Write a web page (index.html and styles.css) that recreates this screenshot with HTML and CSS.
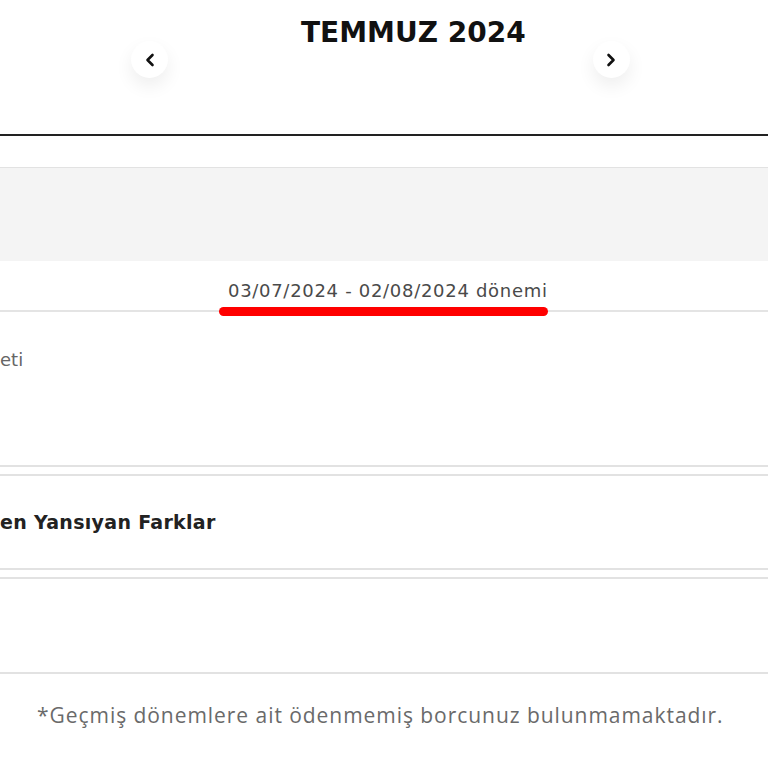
FILE: index.html
```html
<!DOCTYPE html>
<html lang="tr">
<head>
<meta charset="utf-8">
<link rel="stylesheet" href="styles.css">
</head>
<body>
<div class="page">
  <header class="head">
    <button class="nav nav-prev" aria-label="Önceki">
      <svg width="12" height="14" viewBox="0 0 12 14"><path d="M8.5 2 L3.5 7 L8.5 12" fill="none" stroke="#111" stroke-width="2.6" stroke-linecap="round" stroke-linejoin="round"/></svg>
    </button>
    <h1 class="title">TEMMUZ 2024</h1>
    <button class="nav nav-next" aria-label="Sonraki">
      <svg width="12" height="14" viewBox="0 0 12 14"><path d="M3.5 2 L8.5 7 L3.5 12" fill="none" stroke="#111" stroke-width="2.6" stroke-linecap="round" stroke-linejoin="round"/></svg>
    </button>
  </header>
  <div class="rule-dark"></div>
  <div class="spacer"></div>
  <div class="band"></div>
  <div class="period">
    <span class="period-text">03/07/2024 - 02/08/2024 dönemi</span>
  </div>
  <div class="period-line"><span class="red-bar"></span></div>
  <div class="row row-service">
    <span class="label">eti</span>
  </div>
  <div class="row-gap"></div>
  <div class="row row-diff">
    <span class="label bold">en Yansıyan Farklar</span>
  </div>
  <div class="row-gap"></div>
  <div class="row row-empty"></div>
  <p class="note">*Geçmiş dönemlere ait ödenmemiş borcunuz bulunmamaktadır.</p>
</div>
</body>
</html>
```

FILE: styles.css
```css
html, body {
  margin: 0;
  padding: 0;
  background: #fff;
  overflow: hidden;
}
.page {
  width: 768px;
  height: 768px;
  font-family: "DejaVu Sans", sans-serif;
  color: #222;
}
.head {
  height: 134px;
  display: flex;
  align-items: flex-start;
}
.title {
  margin: 17px 0 0 133px;
  font-size: 28px;
  font-weight: 700;
  color: #111;
  line-height: 32px;
}
.nav {
  width: 37px;
  height: 37px;
  border-radius: 50%;
  border: none;
  background: #fff;
  box-shadow: 0 8px 18px rgba(0,0,0,0.07);
  display: flex;
  align-items: center;
  justify-content: center;
  padding: 0;
  margin-top: 41px;
}
.nav-prev { margin-left: 131px; }
.nav-next { margin-left: 67px; }
.rule-dark {
  height: 2px;
  background: #222;
}
.spacer {
  height: 31px;
  border-bottom: 1px solid #e2e2e2;
}
.band {
  height: 93px;
  background: #f4f4f4;
}
.period {
  height: 49px;
  display: flex;
  align-items: flex-end;
}
.period-text {
  font-size: 18px;
  letter-spacing: 0.7px;
  color: #4a4a4a;
  line-height: 20px;
  margin: 0 0 9px 228px;
  white-space: nowrap;
}
.period-line {
  height: 2px;
  background: #e4e4e4;
  display: flex;
  align-items: center;
}
.red-bar {
  display: block;
  margin-left: 219px;
  width: 329px;
  height: 9px;
  border-radius: 5px;
  background: #ff0000;
}
.row {
  border-bottom: 2px solid #e2e2e2;
  display: flex;
  align-items: center;
  white-space: nowrap;
}
.row-service {
  height: 153px;
  align-items: flex-start;
}
.row-service .label {
  margin-top: 37px;
  font-size: 18px;
  color: #666;
}
.row-gap {
  height: 7px;
  border-bottom: 2px solid #e2e2e2;
}
.row-diff {
  height: 92px;
}
.row-diff .label {
  font-size: 19px;
  letter-spacing: 0.3px;
}
.bold { font-weight: 700; color: #222; }
.row-empty {
  height: 93px;
}
.note {
  margin: 28px 0 0 37px;
  font-family: "Open Sans", sans-serif;
  font-size: 21px;
  letter-spacing: 0.95px;
  color: #6a6a6a;
  line-height: 26px;
  white-space: nowrap;
}
```
